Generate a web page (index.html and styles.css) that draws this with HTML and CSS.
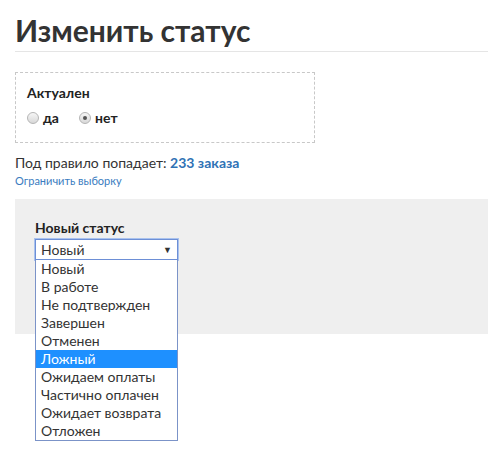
FILE: index.html
```html
<!DOCTYPE html>
<html lang="ru">
<head>
<meta charset="utf-8">
<title>Изменить статус</title>
<link rel="stylesheet" href="styles.css">
</head>
<body>
<div class="page">
  <h1 class="title">Изменить статус</h1>
  <div class="filter-box">
    <div class="filter-label">Актуален</div>
    <div class="radios">
      <label class="radio"><span class="radio-dot"></span>да</label>
      <label class="radio"><span class="radio-dot checked"></span>нет</label>
    </div>
  </div>
  <div class="count">Под правило попадает: <a class="count-link" href="#">233 заказа</a></div>
  <a class="limit" href="#">Ограничить выборку</a>
  <div class="panel">
    <div class="field-label">Новый статус</div>
    <div class="select">
      <div class="select-box"><span>Новый</span><span class="arrow">▼</span></div>
      <ul class="options">
        <li>Новый</li>
        <li>В работе</li>
        <li>Не подтвержден</li>
        <li>Завершен</li>
        <li>Отменен</li>
        <li class="active">Ложный</li>
        <li>Ожидаем оплаты</li>
        <li>Частично оплачен</li>
        <li>Ожидает возврата</li>
        <li>Отложен</li>
      </ul>
    </div>
  </div>
</div>
</body>
</html>
```

FILE: styles.css
```css
html, body {
  margin: 0;
  padding: 0;
  background: #fff;
}
body {
  font-family: Lato, "Open Sans", sans-serif;
  color: #333;
  font-size: 14px;
  min-height: 466px;
}
.page {
  padding: 10px 0 0 15px;
  min-height: 456px;
}
.title {
  margin: 0;
  font-size: 30px;
  font-weight: 700;
  line-height: 41px;
  color: #333;
  border-bottom: 1px solid #e5e5e5;
  height: 42px;
  box-sizing: border-box;
}
.filter-box {
  margin-top: 20px;
  width: 300px;
  height: 71px;
  box-sizing: border-box;
  border: 1px dashed #c8c8c8;
  padding: 11px 0 0 11px;
}
.filter-label {
  font-weight: 700;
  font-size: 14px;
  line-height: 18px;
  color: #222;
}
.radios {
  display: flex;
  gap: 20px;
  margin-top: 7px;
}
.radio {
  display: flex;
  align-items: center;
  gap: 4px;
  font-weight: 700;
  font-size: 14px;
  line-height: 18px;
  color: #222;
}
.radio-dot {
  width: 12px;
  height: 12px;
  border-radius: 50%;
  border: 1px solid #b5b5b5;
  background: linear-gradient(#f6f6f6, #d8d8d8);
  box-sizing: border-box;
  position: relative;
}
.radio-dot.checked::after {
  content: "";
  position: absolute;
  left: 3px;
  top: 3px;
  width: 4px;
  height: 4px;
  border-radius: 50%;
  background: #555;
}
.count {
  margin-top: 11px;
  font-size: 14px;
  line-height: 18px;
  color: #333;
}
.count-link {
  color: #2f72b5;
  font-weight: 700;
  text-decoration: none;
}
.limit {
  display: block;
  font-size: 11px;
  line-height: 16px;
  color: #3a7cc0;
  text-decoration: none;
  margin-top: 1px;
}
.panel {
  margin-top: 10px;
  background: #efefef;
  height: 135px;
  box-sizing: border-box;
  padding: 20px 0 0 20px;
  overflow: visible;
}
.field-label {
  font-weight: 700;
  font-size: 14px;
  line-height: 18px;
  color: #222;
}
.select {
  position: relative;
  width: 143px;
  margin-top: 2px;
  z-index: 2;
}
.select-box {
  height: 21px;
  box-sizing: border-box;
  border: 1px solid #6d8fd6;
  box-shadow: 0 0 0 1px #a9c2ee;
  background: #fff;
  display: flex;
  align-items: center;
  justify-content: space-between;
  padding: 0 5px 0 5px;
  font-size: 14px;
  color: #333;
}
.arrow {
  font-size: 9px;
  color: #333;
}
.options {
  position: absolute;
  left: 0;
  top: 21px;
  width: 143px;
  box-sizing: border-box;
  margin: 0;
  padding: 0;
  list-style: none;
  background: #fff;
  border: 1px solid #7b93c8;
  border-top: none;
}
.options li {
  height: 18px;
  line-height: 18px;
  padding-left: 5px;
  font-size: 14px;
  color: #333;
}
.options li.active {
  background: #1e90ff;
  color: #fff;
}
```
